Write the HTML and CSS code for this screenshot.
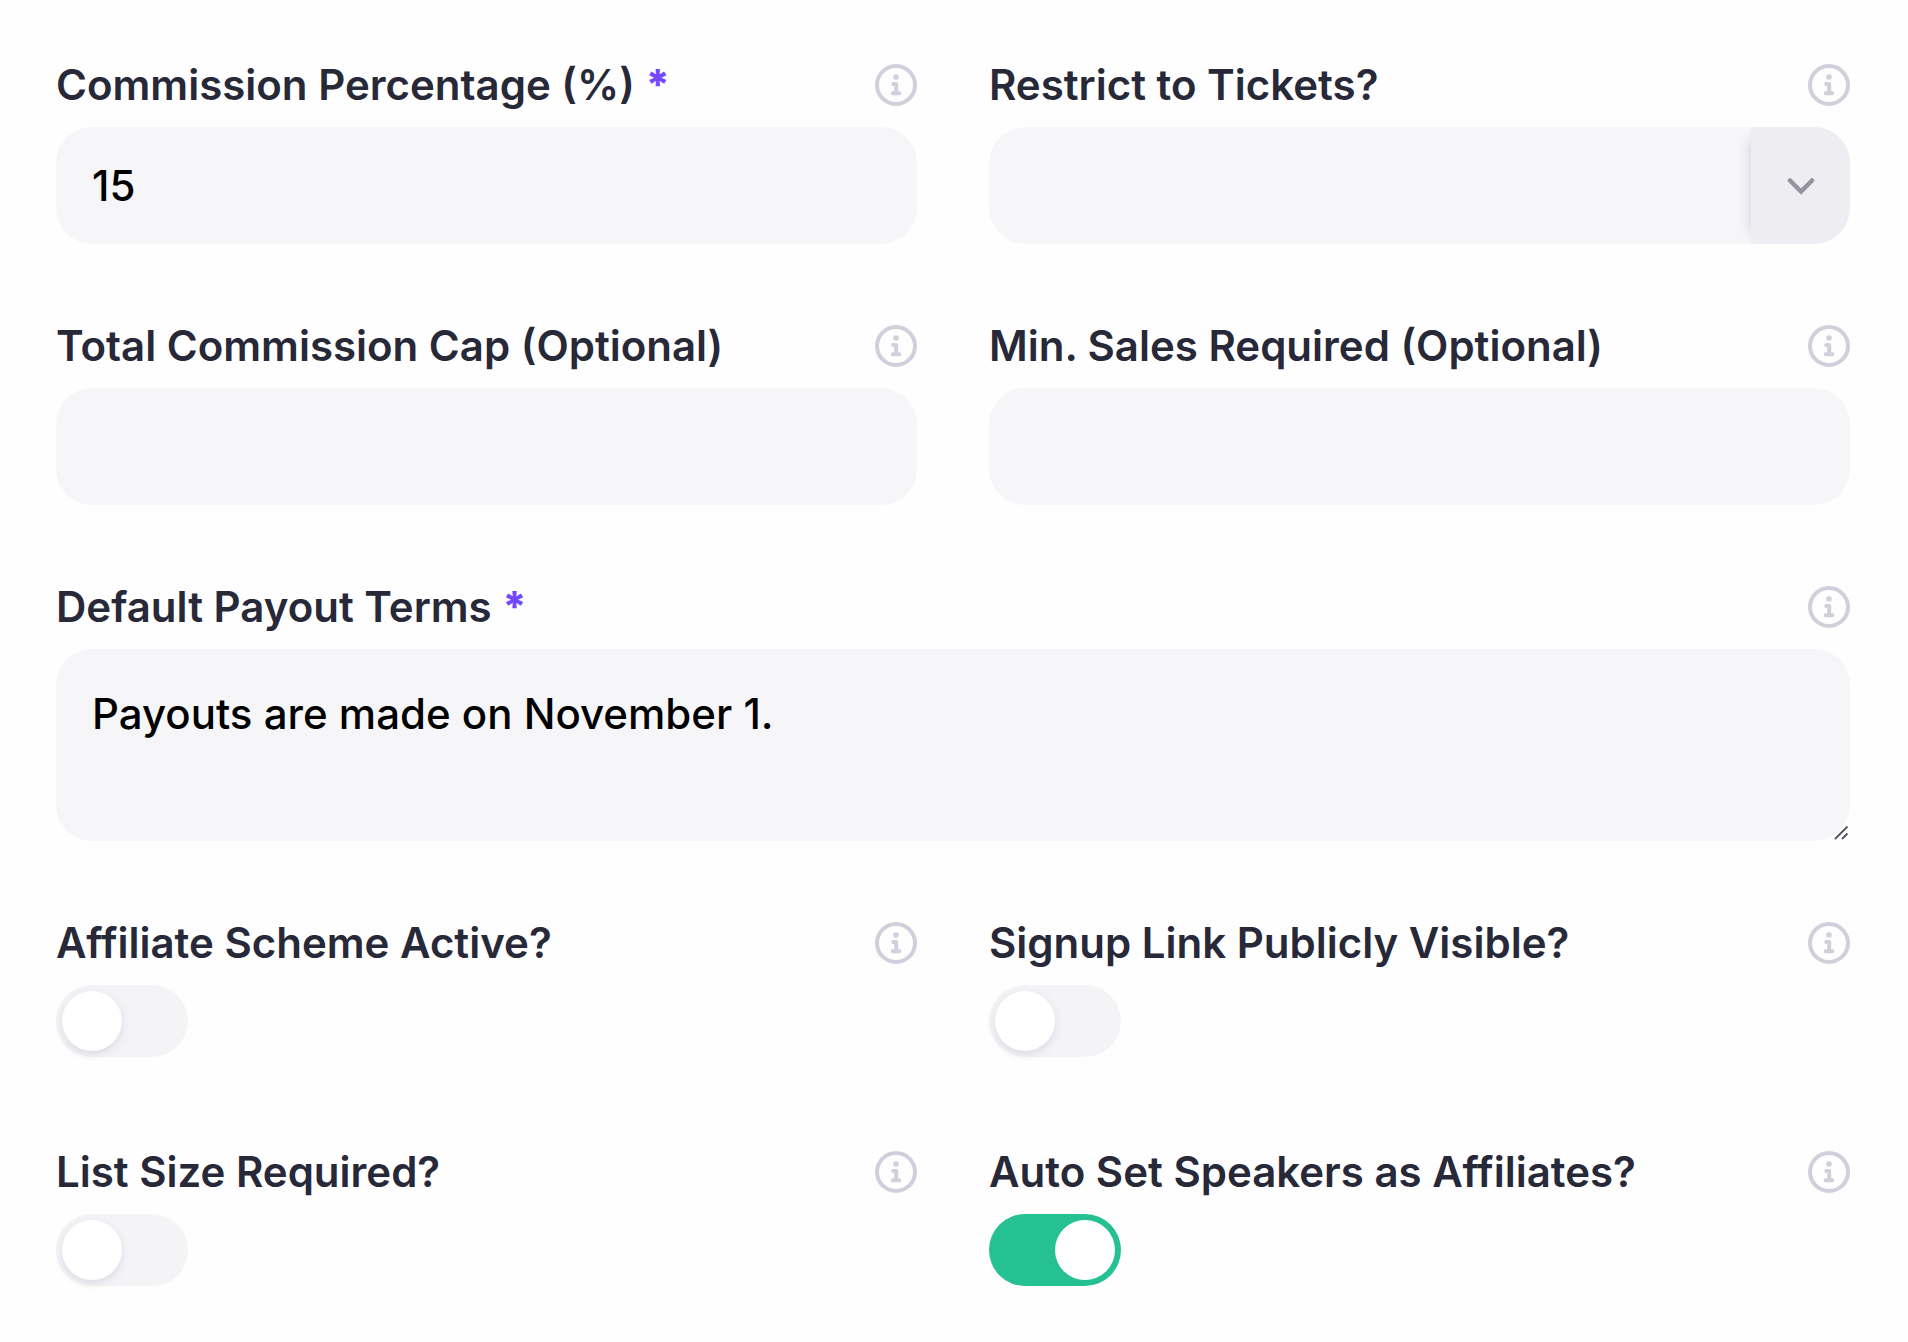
FILE: index.html
```html
<!DOCTYPE html>
<html lang="en">
<head>
<meta charset="utf-8">
<meta name="viewport" content="width=device-width, initial-scale=1">
<title>Affiliate Settings</title>
<link rel="stylesheet" href="styles.css">
</head>
<body>
<svg class="sprite" aria-hidden="true">
  <symbol id="info" viewBox="0 0 42 42">
    <circle cx="21" cy="21" r="19" fill="none" stroke="currentColor" stroke-width="4"/>
    <circle cx="21" cy="13" r="2.8" fill="currentColor"/>
    <path d="M18.200 20h3v9.300M17.700 29.300h6.600" fill="none" stroke="currentColor" stroke-width="4" stroke-linecap="round" stroke-linejoin="round"/>
  </symbol>
</svg>
<form class="form">
  <div class="field">
    <div class="field-head">
      <label for="commission">Commission Percentage (%) <span class="required">*</span></label>
      <button type="button" class="info" aria-label="About commission percentage"><svg><use href="#info"/></svg></button>
    </div>
    <input class="control" id="commission" type="text" inputmode="numeric" value="15">
  </div>
  <div class="field">
    <div class="field-head">
      <label for="tickets">Restrict to Tickets?</label>
      <button type="button" class="info" aria-label="About restricting to tickets"><svg><use href="#info"/></svg></button>
    </div>
    <div class="select">
      <select class="control" id="tickets"><option value=""></option></select>
      <span class="select-arrow"><svg viewBox="0 0 28 18"><path d="M3 3.500l11 11 11-11" fill="none" stroke="currentColor" stroke-width="4.500" stroke-linecap="round"/></svg></span>
    </div>
  </div>
  <div class="field">
    <div class="field-head">
      <label for="cap">Total Commission Cap (Optional)</label>
      <button type="button" class="info" aria-label="About total commission cap"><svg><use href="#info"/></svg></button>
    </div>
    <input class="control" id="cap" type="text">
  </div>
  <div class="field">
    <div class="field-head">
      <label for="min-sales">Min. Sales Required (Optional)</label>
      <button type="button" class="info" aria-label="About minimum sales"><svg><use href="#info"/></svg></button>
    </div>
    <input class="control" id="min-sales" type="text">
  </div>
  <div class="field field-wide">
    <div class="field-head">
      <label for="terms">Default Payout Terms <span class="required">*</span></label>
      <button type="button" class="info" aria-label="About payout terms"><svg><use href="#info"/></svg></button>
    </div>
    <div class="textarea">
      <textarea class="control" id="terms">Payouts are made on November 1.</textarea>
      <svg class="grip" viewBox="0 0 16 16" aria-hidden="true"><path d="M1 14L13.500 1.500M8 14L13.500 8.500" fill="none" stroke="currentColor" stroke-width="1.800"/></svg>
    </div>
  </div>
  <div class="field field-toggle">
    <div class="field-head">
      <label for="active">Affiliate Scheme Active?</label>
      <button type="button" class="info" aria-label="About scheme status"><svg><use href="#info"/></svg></button>
    </div>
    <input class="toggle" id="active" type="checkbox">
  </div>
  <div class="field field-toggle">
    <div class="field-head">
      <label for="signup">Signup Link Publicly Visible?</label>
      <button type="button" class="info" aria-label="About the signup link"><svg><use href="#info"/></svg></button>
    </div>
    <input class="toggle" id="signup" type="checkbox">
  </div>
  <div class="field field-toggle">
    <div class="field-head">
      <label for="list-size">List Size Required?</label>
      <button type="button" class="info" aria-label="About list size"><svg><use href="#info"/></svg></button>
    </div>
    <input class="toggle" id="list-size" type="checkbox">
  </div>
  <div class="field field-toggle">
    <div class="field-head">
      <label for="speakers">Auto Set Speakers as Affiliates?</label>
      <button type="button" class="info" aria-label="About speakers as affiliates"><svg><use href="#info"/></svg></button>
    </div>
    <input class="toggle" id="speakers" type="checkbox" checked>
  </div>
</form>
</body>
</html>
```

FILE: styles.css
```css
* {
  box-sizing: border-box;
}

body {
  margin: 0;
  background: #fefefe;
  color: #272838;
  font-family: Inter, "Liberation Sans", sans-serif;
  font-size: 42px;
  line-height: 52px;
}

.sprite {
  display: none;
}

.form {
  display: grid;
  grid-template-columns: minmax(0, 1fr) minmax(0, 1fr);
  gap: 81px 72px;
  padding: 64px 58px 42px 56px;
}

.field {
  display: flex;
  flex-direction: column;
  gap: 21px;
}

.field-wide {
  grid-column: 1 / -1;
}

.field-toggle {
  padding-bottom: 13px;
}

.field-head {
  display: flex;
  align-items: center;
  justify-content: space-between;
  height: 42px;
  font-weight: 600;
}

.required {
  color: #7549ff;
  font-weight: 800;
}

.info {
  width: 42px;
  height: 42px;
  padding: 0;
  border: 0;
  background: none;
  color: #d0d0dc;
}

.info svg {
  display: block;
  width: 42px;
  height: 42px;
}

.control {
  display: block;
  width: 100%;
  height: 117px;
  margin: 0;
  padding: 0 36px;
  border: 0;
  border-radius: 36px;
  background: #f6f6f9;
  color: #000;
  font: inherit;
  font-weight: 500;
  appearance: none;
}

textarea.control {
  height: 192px;
  padding-top: 39px;
  resize: none;
}

.select,
.textarea {
  position: relative;
}

.select {
  overflow: hidden;
  border-radius: 36px;
}

.select-arrow {
  position: absolute;
  top: 0;
  right: 0;
  bottom: 0;
  display: flex;
  align-items: center;
  justify-content: center;
  width: 99px;
  background: #eeeef2;
  box-shadow: -12px 0 12px -12px #c9c9d8;
  color: #9494a0;
  pointer-events: none;
}

.select-arrow svg {
  width: 28px;
  height: 18px;
}

.grip {
  position: absolute;
  right: 0;
  bottom: 0;
  width: 16px;
  height: 16px;
  color: #555562;
  pointer-events: none;
}

.toggle {
  width: 132px;
  height: 72px;
  margin: 0;
  padding: 6px;
  border-radius: 36px;
  background: #f4f4f7;
  appearance: none;
}

.toggle::before {
  content: "";
  display: block;
  width: 60px;
  height: 60px;
  border-radius: 50%;
  background: #fff;
  box-shadow: 0 3px 9px #d8d8e2;
}

.toggle:checked {
  background: #26c192;
}

.toggle:checked::before {
  margin-left: auto;
  box-shadow: none;
}
```
